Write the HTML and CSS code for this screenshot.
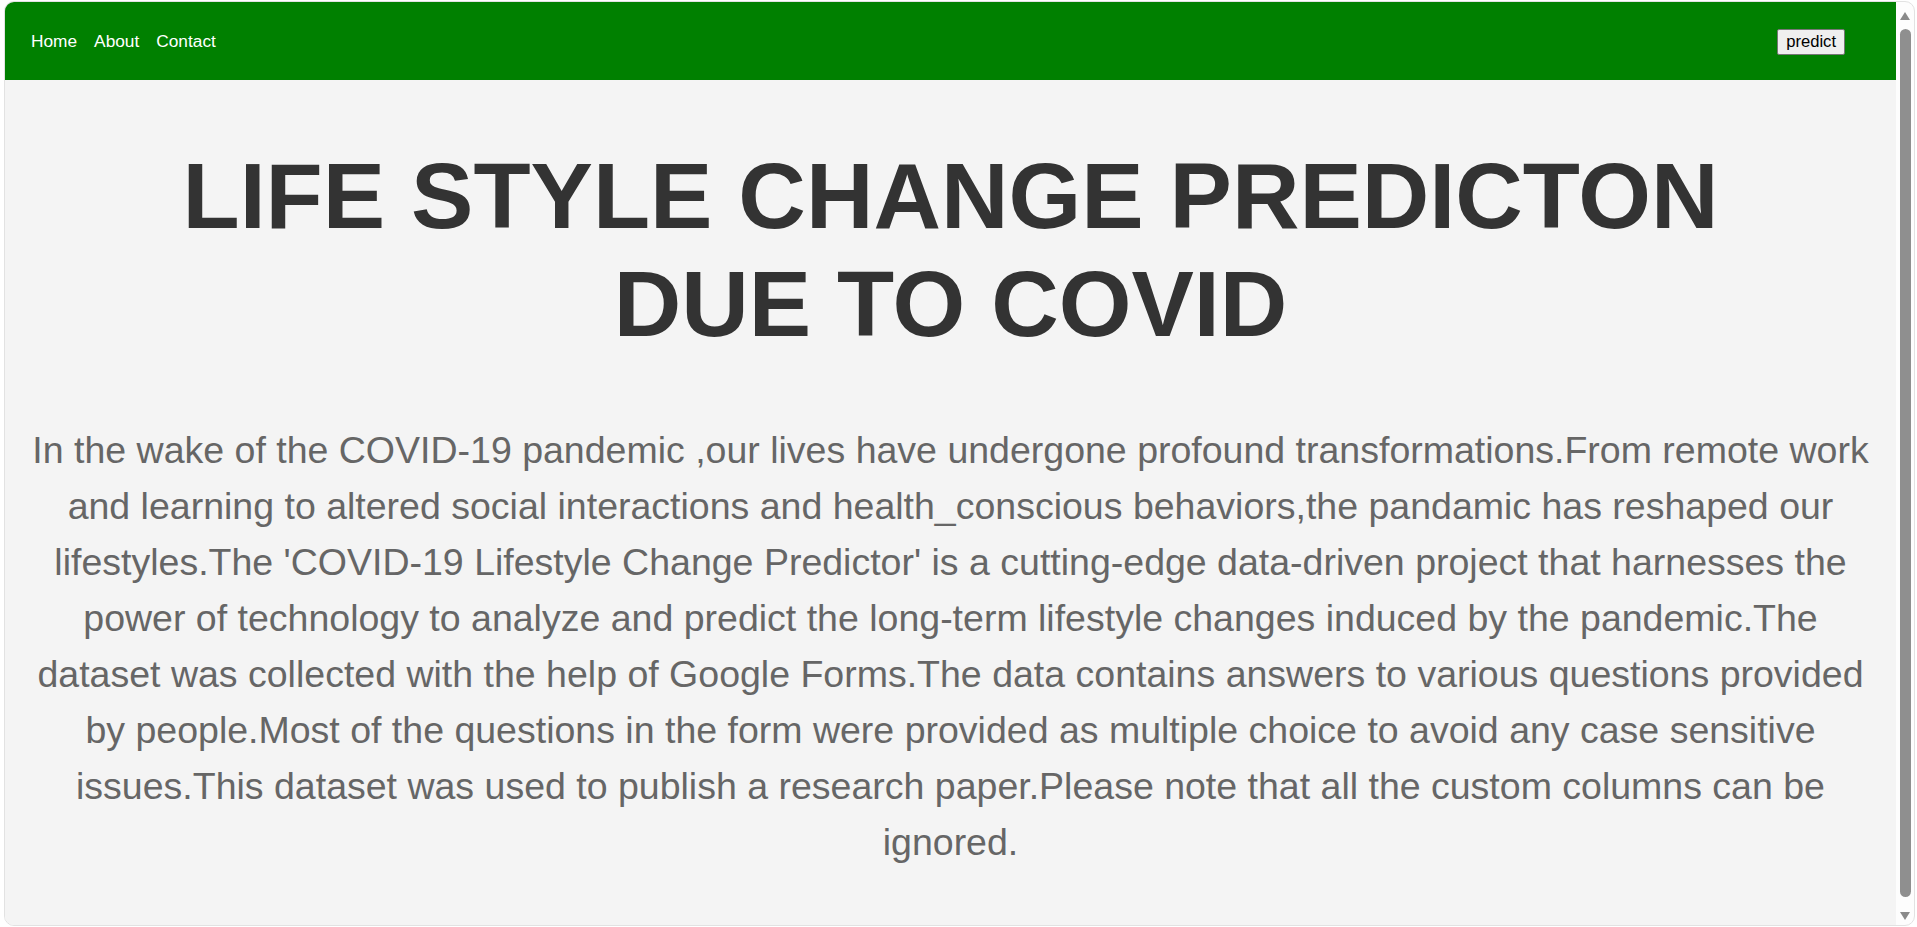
FILE: index.html
```html
<!DOCTYPE html>
<html lang="en">
<head>
<meta charset="utf-8">
<title>Life Style Change Prediction</title>
<link rel="stylesheet" href="styles.css">
</head>
<body>
<div class="window">
  <div class="main">
    <nav class="nav">
      <div class="links">
        <a href="#">Home</a>
        <a href="#">About</a>
        <a href="#">Contact</a>
      </div>
      <button class="predict" type="button">predict</button>
    </nav>
    <h1 class="title">LIFE STYLE CHANGE PREDICTON DUE TO COVID</h1>
    <p class="intro">In the wake of the COVID-19 pandemic ,our lives have undergone profound transformations.From remote work and learning to altered social interactions and health_conscious behaviors,the pandamic has reshaped our lifestyles.The 'COVID-19 Lifestyle Change Predictor' is a cutting-edge data-driven project that harnesses the power of technology to analyze and predict the long-term lifestyle changes induced by the pandemic.The dataset was collected with the help of Google Forms.The data contains answers to various questions provided by people.Most of the questions in the form were provided as multiple choice to avoid any case sensitive issues.This dataset was used to publish a research paper.Please note that all the custom columns can be ignored.</p>
  </div>
  <div class="scrollbar">
    <svg class="arrow" width="10" height="8" viewBox="0 0 10 8"><polygon points="5,0 10,8 0,8" fill="#8a8a8a"/></svg>
    <div class="thumb"></div>
    <svg class="arrow" width="10" height="8" viewBox="0 0 10 8"><polygon points="0,0 10,0 5,8" fill="#8a8a8a"/></svg>
  </div>
</div>
</body>
</html>
```

FILE: styles.css
```css
html, body {
  margin: 0;
  padding: 0;
  height: 927px;
  overflow: hidden;
  background: #ffffff;
}

body {
  font-family: "Liberation Sans", Arial, sans-serif;
}

.window {
  margin: 1px 2px 0 4px;
  height: 923px;
  border: 1px solid #e2e2e2;
  border-radius: 10px;
  overflow: hidden;
  display: flex;
  background: #fdfdfd;
}

.main {
  flex: 1;
  background: #f4f4f4;
  overflow: hidden;
}

.nav {
  height: 78px;
  background: #008000;
  display: flex;
  align-items: center;
  justify-content: space-between;
  padding: 0 51px 0 26px;
}

.links {
  display: flex;
  gap: 17px;
}

.links a {
  color: #ffffff;
  text-decoration: none;
  font-size: 17.3px;
}

.predict {
  font-family: "Liberation Sans", Arial, sans-serif;
  font-size: 16.6px;
  color: #000;
  background: #efefef;
  border: 1px solid #767676;
  border-radius: 2px;
  padding: 2px 8px;
  line-height: normal;
  margin-top: 2px;
}

.title {
  margin: 62px 0 0;
  padding: 0 110px;
  font-size: 93.5px;
  font-weight: bold;
  line-height: 108px;
  text-align: center;
  color: #333333;
}

.intro {
  margin: 64px 20px 0;
  font-size: 37.5px;
  line-height: 56px;
  text-align: center;
  color: #666666;
}

.scrollbar {
  width: 18px;
  display: flex;
  flex-direction: column;
  align-items: center;
  padding-top: 10px;
}

.thumb {
  width: 11px;
  height: 868px;
  margin: 9px 0 15px;
  border-radius: 6px;
  background: #8f8f8f;
}

.arrow {
  display: block;
}
```
